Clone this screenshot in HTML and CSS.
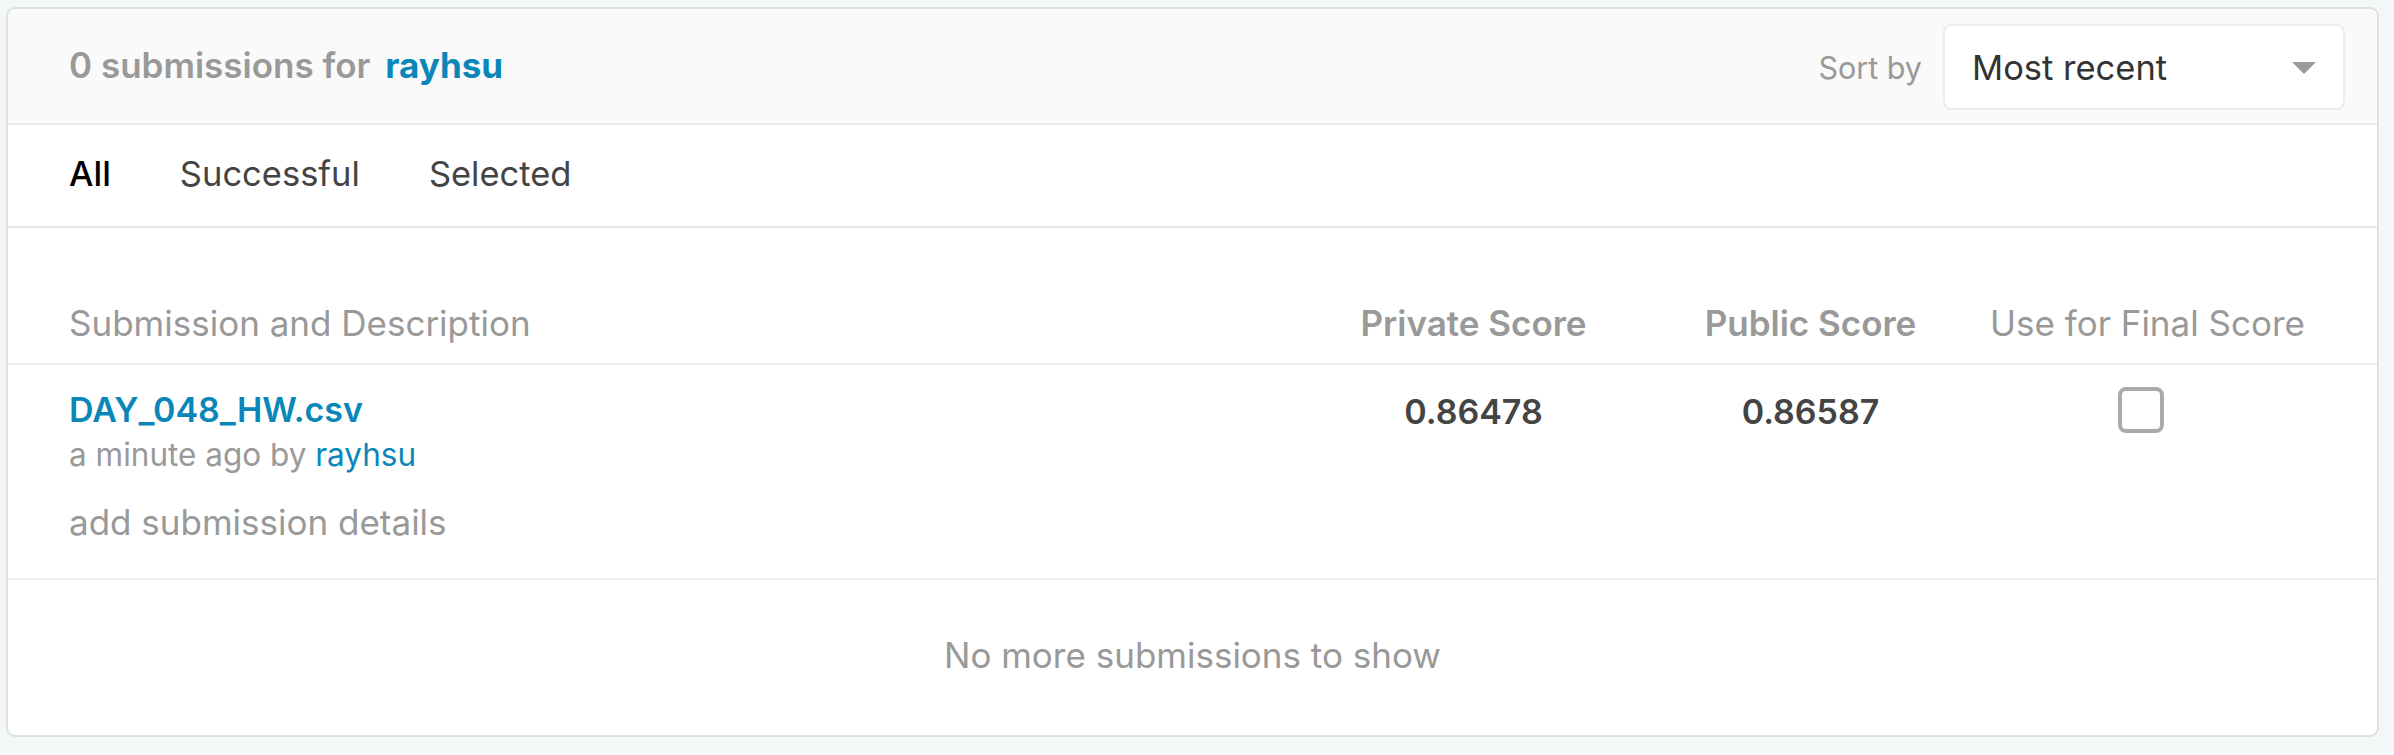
FILE: index.html
```html
<!DOCTYPE html>
<html lang="en">
<head>
<meta charset="utf-8">
<title>Submissions</title>
<link rel="stylesheet" href="styles.css">
</head>
<body>
<div class="card">
  <div class="card-header">
    <div class="title">0 submissions for <a class="user-link" href="#">rayhsu</a></div>
    <div class="sort">
      <span class="sort-label">Sort by</span>
      <div class="select">
        <span class="select-value">Most recent</span>
        <span class="caret"></span>
      </div>
    </div>
  </div>
  <div class="tabs">
    <span class="tab tab-active">All</span>
    <span class="tab">Successful</span>
    <span class="tab">Selected</span>
  </div>
  <div class="table">
    <div class="thead">
      <div class="col col-main">Submission and Description</div>
      <div class="col col-score col-bold">Private Score</div>
      <div class="col col-score col-bold">Public Score</div>
      <div class="col col-score">Use for Final Score</div>
    </div>
    <div class="row">
      <div class="col col-main">
        <a class="file-link" href="#">DAY_048_HW.csv</a>
        <div class="meta">a minute ago by <a class="meta-link" href="#">rayhsu</a></div>
        <div class="details">add submission details</div>
      </div>
      <div class="col col-score score">0.86478</div>
      <div class="col col-score score">0.86587</div>
      <div class="col col-score"><span class="checkbox"></span></div>
    </div>
  </div>
  <div class="footer">No more submissions to show</div>
</div>
</body>
</html>
```

FILE: styles.css
```css
html, body {
  margin: 0;
  padding: 0;
}
body {
  background: #f4f7f8;
  font-family: "Inter", "Open Sans", "DejaVu Sans", sans-serif;
  padding: 7px 15px 0 6px;
}
a { text-decoration: none; }

.card {
  background: #fff;
  border: 2px solid #dde1e4;
  border-radius: 9px;
  overflow: hidden;
  height: 730px;
  box-sizing: border-box;
  display: flex;
  flex-direction: column;
}

.card-header {
  height: 116px;
  box-sizing: border-box;
  background: #fafafa;
  border-bottom: 2px solid #ebebeb;
  display: flex;
  align-items: center;
  justify-content: space-between;
  padding: 0 32px 0 61px;
}
.title {
  font-size: 35px;
  font-weight: 600;
  color: #999;
  padding-bottom: 2px;
}
.user-link {
  color: #0a87b8;
  font-weight: 700;
  margin-left: 6px;
}
.sort {
  display: flex;
  align-items: center;
  gap: 21px;
  padding-top: 2px;
}
.sort-label {
  font-size: 30.5px;
  color: #999;
}
.select {
  width: 402px;
  height: 86px;
  box-sizing: border-box;
  border: 2px solid #ececec;
  border-radius: 8px;
  background: #fff;
  display: flex;
  align-items: center;
  justify-content: space-between;
  padding: 0 27px 0 27px;
}
.select-value {
  font-size: 34.5px;
  color: #333;
}
.caret {
  width: 0;
  height: 0;
  border-left: 12px solid transparent;
  border-right: 12px solid transparent;
  border-top: 12px solid #999;
  margin-top: 2px;
}

.tabs {
  height: 103px;
  box-sizing: border-box;
  border-bottom: 2px solid #e6e6e6;
  display: flex;
  align-items: center;
  gap: 69px;
  padding: 0 61px 4px;
}
.tab {
  font-size: 34.5px;
  color: #444;
}
.tab-active {
  color: #000;
  font-weight: 500;
}

.table {
  display: flex;
  flex-direction: column;
}
.thead {
  display: flex;
  align-items: flex-end;
  height: 137px;
  box-sizing: border-box;
  padding: 0 61px 17px;
  border-bottom: 2px solid #ececec;
  font-size: 35px;
  color: #999;
  line-height: 46px;
}
.col-main {
  flex: 1;
}
.col-score {
  width: 337px;
  text-align: center;
  flex: none;
}
.col-bold {
  font-weight: 600;
}
.row {
  display: flex;
  align-items: flex-start;
  height: 215px;
  box-sizing: border-box;
  padding: 22px 61px 0;
  border-bottom: 2px solid #ececec;
}
.file-link {
  display: block;
  font-size: 34px;
  font-weight: 600;
  color: #0a87b8;
  line-height: 46px;
}
.meta {
  font-size: 31.5px;
  color: #999;
  line-height: 44px;
}
.meta-link {
  color: #0a87b8;
}
.details {
  font-size: 35px;
  color: #999;
  margin-top: 22px;
  line-height: 46px;
}
.score {
  font-size: 34px;
  font-weight: 600;
  color: #444;
  line-height: 46px;
  padding-top: 2px;
}
.checkbox {
  display: inline-block;
  width: 46px;
  height: 46px;
  box-sizing: border-box;
  border: 4px solid #aaa;
  border-radius: 8px;
  margin-left: -14px;
}

.footer {
  flex: 1;
  display: flex;
  align-items: center;
  justify-content: center;
  font-size: 35px;
  color: #999;
  padding-bottom: 5px;
}
```
